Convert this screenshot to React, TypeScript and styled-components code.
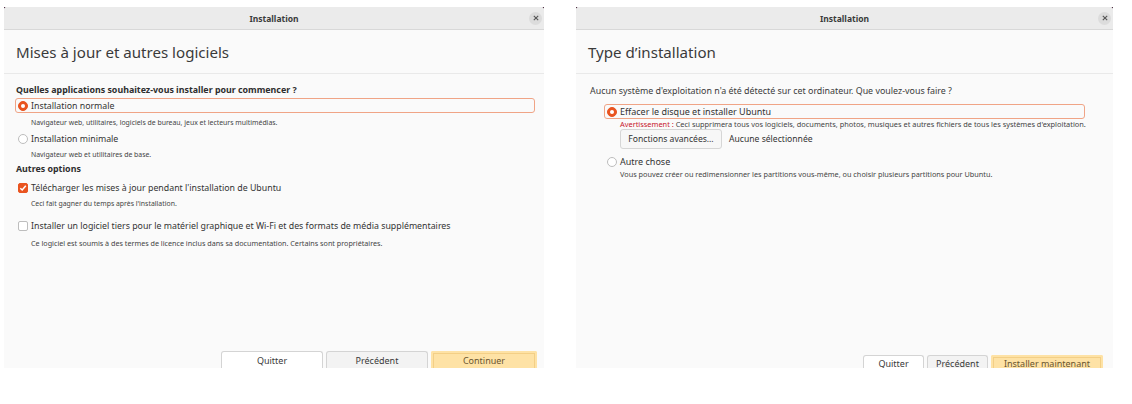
import React from 'react';
import styled, { createGlobalStyle } from 'styled-components';

const GlobalStyle = createGlobalStyle`
  body {
    margin: 0;
    background: #ffffff;
    font-family: "Noto Sans", "DejaVu Sans", sans-serif;
    color: #3c3c3c;
  }
`;

function CloseIcon() {
  return (
    <svg width="6" height="6" viewBox="0 0 6 6">
      <path d="M0.8 0.8 L5.2 5.2 M5.2 0.8 L0.8 5.2" stroke="#555" strokeWidth="1.1" />
    </svg>
  );
}

function Radio({ checked }: { checked?: boolean }) {
  return <UIRadio checked={!!checked}>{checked && <UIRadioDot />}</UIRadio>;
}

function Check({ checked }: { checked?: boolean }) {
  return (
    <UICheck checked={!!checked}>
      {checked && (
        <svg width="8" height="8" viewBox="0 0 8 8">
          <path d="M1.3 4.2 L3.2 6 L6.8 1.8" stroke="#fff" strokeWidth="1.5" fill="none" />
        </svg>
      )}
    </UICheck>
  );
}

interface WindowProps {
  title: string;
  width: number;
  footerHeight: number;
  footerRight: number;
  labelTop: number;
  primary: string;
  quitWidth: number;
  primaryWidth: number;
  children: React.ReactNode;
}

function InstallerWindow({
  title,
  width,
  footerHeight,
  footerRight,
  labelTop,
  primary,
  quitWidth,
  primaryWidth,
  children,
}: WindowProps) {
  return (
    <UIFrame width={width}>
      <UIWindow>
        <UITitleBar>
          <span />
          <UITitle>Installation</UITitle>
          <UIClose>
            <CloseIcon />
          </UIClose>
        </UITitleBar>
        <UIHeader>{title}</UIHeader>
        <UIContent>{children}</UIContent>
        <UIFooter height={footerHeight} right={footerRight}>
          <UIButton width={quitWidth} labelTop={labelTop}>
            Quitter
          </UIButton>
          <UIButton width={quitWidth} labelTop={labelTop} muted>
            Précédent
          </UIButton>
          <UIPrimary width={primaryWidth} labelTop={labelTop}>
            {primary}
          </UIPrimary>
        </UIFooter>
      </UIWindow>
    </UIFrame>
  );
}

export default function App() {
  return (
    <>
      <GlobalStyle />
      <UIDesktop>
        <InstallerWindow
          title="Mises à jour et autres logiciels"
          width={540}
          footerHeight={17}
          footerRight={7}
          labelTop={3}
          primary="Continuer"
          quitWidth={102}
          primaryWidth={106}
        >
          <UILeftPane>
            <UIStrong>Quelles applications souhaitez-vous installer pour commencer ?</UIStrong>
            <UIOption focused size={8.8}>
              <Radio checked />
              Installation normale
            </UIOption>
            <UIDesc indent={16} top={5}>
              Navigateur web, utilitaires, logiciels de bureau, jeux et lecteurs multimédias.
            </UIDesc>
            <UIOption top={3} size={8.8}>
              <Radio />
              Installation minimale
            </UIOption>
            <UIDesc indent={16} top={4}>
              Navigateur web et utilitaires de base.
            </UIDesc>
            <UIStrong top={2}>Autres options</UIStrong>
            <UIOption top={4} size={8.8}>
              <Check checked />
              Télécharger les mises à jour pendant l'installation de Ubuntu
            </UIOption>
            <UIDesc indent={16} top={4}>
              Ceci fait gagner du temps après l'installation.
            </UIDesc>
            <UIOption top={9} size={8.8}>
              <Check />
              Installer un logiciel tiers pour le matériel graphique et Wi-Fi et des formats de
              média supplémentaires
            </UIOption>
            <UIDesc indent={16} top={5} size={7.2}>
              Ce logiciel est soumis à des termes de licence inclus dans sa documentation. Certains
              sont propriétaires.
            </UIDesc>
          </UILeftPane>
        </InstallerWindow>
        <InstallerWindow
          title="Type d’installation"
          width={537}
          footerHeight={13}
          footerRight={10}
          labelTop={2}
          primary="Installer maintenant"
          quitWidth={61}
          primaryWidth={112}
        >
          <UIRightPane>
            <UIIntro>
              Aucun système d'exploitation n'a été détecté sur cet ordinateur. Que voulez-vous
              faire ?
            </UIIntro>
            <UIChoices>
              <UIOption focused top={6}>
                <Radio checked />
                Effacer le disque et installer Ubuntu
              </UIOption>
              <UIDesc indent={16} top={0} size={7.4}>
                <UIWarn>Avertissement :</UIWarn> Ceci supprimera tous vos logiciels, documents,
                photos, musiques et autres fichiers de tous les systèmes d'exploitation.
              </UIDesc>
              <UIAdvanced>
                <UISmallButton>Fonctions avancées…</UISmallButton>
                Aucune sélectionnée
              </UIAdvanced>
              <UIOption top={5}>
                <Radio />
                Autre chose
              </UIOption>
              <UIDesc indent={16} top={0} size={7.3}>
                Vous pouvez créer ou redimensionner les partitions vous-même, ou choisir plusieurs
                partitions pour Ubuntu.
              </UIDesc>
            </UIChoices>
          </UIRightPane>
        </InstallerWindow>
      </UIDesktop>
    </>
  );
}

const UIDesktop = styled.div`
  display: flex;
  gap: 32px;
  padding: 7px 0 0 4px;
`;

const UIFrame = styled.div<{ width: number }>`
  width: ${(p) => p.width}px;
  height: 361px;
  background: #2c0a22;
`;

const UIWindow = styled.div`
  height: 100%;
  display: flex;
  flex-direction: column;
  background: #fafafa;
  border-radius: 3px 3px 0 0;
`;

const UITitleBar = styled.div`
  height: 22px;
  display: grid;
  grid-template-columns: 1fr auto 1fr;
  align-items: center;
  background: #ebebeb;
  border-bottom: 1px solid #d8d8d8;
  border-radius: 3px 3px 0 0;
`;

const UITitle = styled.div`
  font-size: 8.5px;
  font-weight: 700;
  color: #3a3a3a;
`;

const UIClose = styled.div`
  justify-self: end;
  margin-right: 2px;
  width: 13px;
  height: 13px;
  border-radius: 50%;
  background: #dcdcdc;
  display: flex;
  align-items: center;
  justify-content: center;
`;

const UIHeader = styled.div`
  height: 43px;
  display: flex;
  align-items: center;
  padding-left: 12px;
  font-size: 15.1px;
  color: #3a3a3a;
  border-bottom: 1px solid #e9e9e9;
`;

const UIContent = styled.div`
  flex: 1;
`;

const UILeftPane = styled.div`
  display: flex;
  flex-direction: column;
  padding: 9px 9px 0 11px;
`;

const UIRightPane = styled.div`
  padding: 10px 28px 0 14px;
`;

const UIChoices = styled.div`
  display: flex;
  flex-direction: column;
  padding-left: 14px;
`;

const UIStrong = styled.div<{ top?: number }>`
  margin-top: ${(p) => p.top ?? 0}px;
  padding-left: 1px;
  font-size: 8.85px;
  font-weight: 700;
  line-height: 14px;
  color: #2e2e2e;
`;

const UIIntro = styled.div`
  font-size: 8.9px;
  line-height: 14px;
  color: #3a3a3a;
  white-space: nowrap;
`;

const UIOption = styled.div<{ focused?: boolean; top?: number; size?: number }>`
  margin-top: ${(p) => p.top ?? 1}px;
  height: 15px;
  display: flex;
  align-items: center;
  gap: 3px;
  padding-left: 2px;
  box-sizing: border-box;
  border: 1px solid ${(p) => (p.focused ? '#f0a486' : 'transparent')};
  border-radius: 3px;
  font-size: ${(p) => p.size ?? 9}px;
  color: #333;
  white-space: nowrap;
`;

const UIRadio = styled.div<{ checked: boolean }>`
  width: 10px;
  height: 10px;
  box-sizing: border-box;
  border-radius: 50%;
  display: flex;
  align-items: center;
  justify-content: center;
  background: ${(p) => (p.checked ? '#e95420' : '#ffffff')};
  border: 1px solid ${(p) => (p.checked ? '#e95420' : '#bdbdbd')};
`;

const UIRadioDot = styled.div`
  width: 4px;
  height: 4px;
  border-radius: 50%;
  background: #fff;
`;

const UICheck = styled.div<{ checked: boolean }>`
  width: 10px;
  height: 10px;
  box-sizing: border-box;
  border-radius: 2px;
  display: flex;
  align-items: center;
  justify-content: center;
  background: ${(p) => (p.checked ? '#e95420' : '#ffffff')};
  border: 1px solid ${(p) => (p.checked ? '#e95420' : '#bdbdbd')};
`;

const UIDesc = styled.div<{ indent: number; top: number; size?: number }>`
  margin-top: ${(p) => p.top}px;
  padding-left: ${(p) => p.indent}px;
  font-size: ${(p) => p.size ?? 6.9}px;
  line-height: 10px;
  color: #444;
  white-space: nowrap;
`;

const UIWarn = styled.span`
  color: #c7162b;
`;

const UIAdvanced = styled.div`
  padding-left: 16px;
  display: flex;
  align-items: center;
  gap: 7px;
  font-size: 8.6px;
  color: #333;
`;

const UISmallButton = styled.div`
  width: 102px;
  height: 20px;
  box-sizing: border-box;
  display: flex;
  align-items: center;
  justify-content: center;
  border: 1px solid #d6d6d6;
  border-radius: 3px;
  background: #f7f7f7;
  font-size: 8.6px;
  color: #333;
`;

const UIFooter = styled.div<{ height: number; right: number }>`
  height: ${(p) => p.height}px;
  display: flex;
  justify-content: flex-end;
  gap: 3px;
  padding-right: ${(p) => p.right}px;
`;

const UIButton = styled.div<{ width: number; labelTop: number; muted?: boolean }>`
  width: ${(p) => p.width}px;
  height: 100%;
  box-sizing: border-box;
  padding-top: ${(p) => p.labelTop}px;
  text-align: center;
  font-size: 9px;
  line-height: 12px;
  color: #3a3a3a;
  background: ${(p) => (p.muted ? '#f3f3f3' : '#ffffff')};
  border: 1px solid #d4d4d4;
  border-bottom: none;
  border-radius: 3px 3px 0 0;
`;

const UIPrimary = styled.div<{ width: number; labelTop: number }>`
  width: ${(p) => p.width}px;
  height: calc(100% + 5px);
  box-sizing: border-box;
  padding-top: ${(p) => p.labelTop - 1}px;
  text-align: center;
  font-size: 9px;
  line-height: 12px;
  color: #6a5630;
  background: #fee2a5;
  border: 2px solid #fee2a5;
  box-shadow: inset 0 0 0 1px #f3cf86;
  border-bottom: none;
  border-radius: 2px 2px 0 0;
`;
